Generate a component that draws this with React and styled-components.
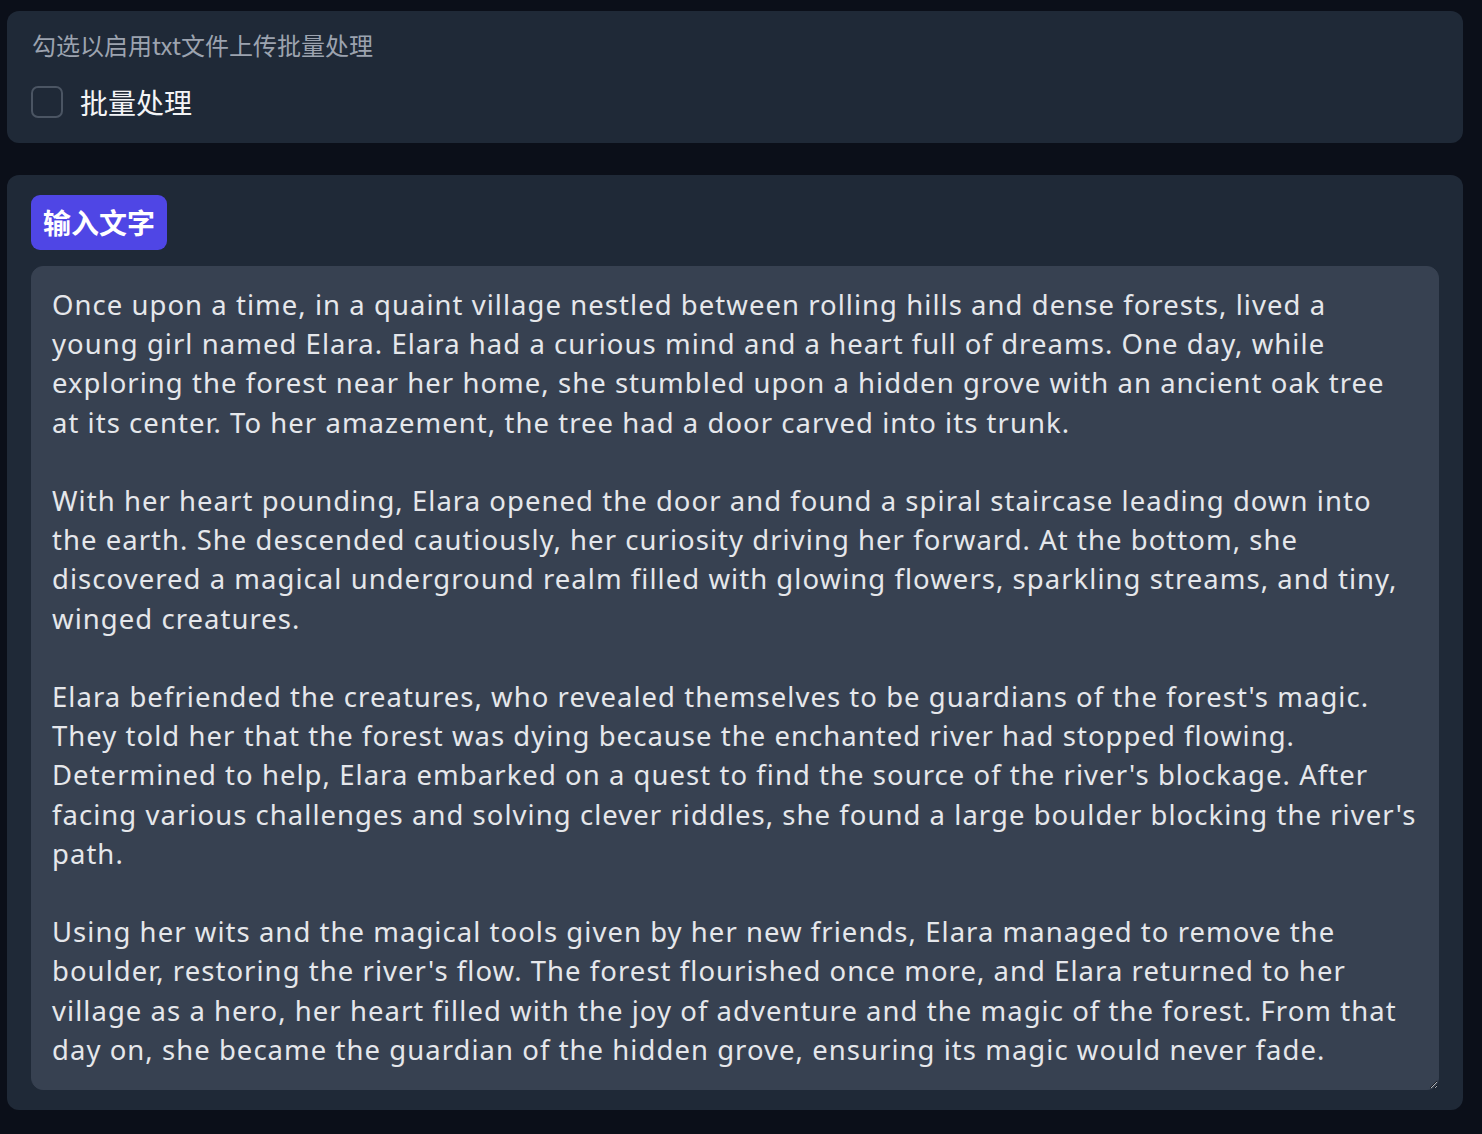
import React from "react";
import styled, { createGlobalStyle } from "styled-components";

const GlobalStyle = createGlobalStyle`
  html, body {
    margin: 0;
    background: #0b0f19;
  }
  body {
    font-family: "Noto Sans", "Noto Sans CJK SC", sans-serif;
    color: #e5e7eb;
  }
`;

const Page = styled.div`
  display: flex;
  flex-direction: column;
  gap: 32px;
  padding: 11px 19px 24px 7px;
`;

const Panel = styled.section`
  background: #1f2937;
  border-radius: 12px;
  padding: ${({ $pad }) => $pad};
  display: flex;
  flex-direction: column;
`;

const Hint = styled.div`
  font-family: "Noto Sans CJK SC", sans-serif;
  font-size: 24px;
  line-height: 32px;
  color: #9ca3af;
  margin-left: 1px;
`;

const CheckRow = styled.label`
  display: flex;
  align-items: center;
  gap: 17px;
  margin-top: 25px;
  cursor: pointer;
`;

const Box = styled.input.attrs({ type: "checkbox" })`
  appearance: none;
  margin: 0;
  width: 32px;
  height: 32px;
  border: 2px solid #4b5563;
  border-radius: 7px;
  background: #1f2937;
  box-sizing: border-box;
`;

const CheckText = styled.span`
  font-family: "Noto Sans CJK SC", sans-serif;
  font-size: 28px;
  line-height: 32px;
  font-weight: 400;
  color: #f3f4f6;
`;

const Badge = styled.span`
  align-self: flex-start;
  background: #4f46e5;
  color: #fff;
  font-family: "Noto Sans CJK SC", sans-serif;
  font-weight: 700;
  font-size: 28px;
  line-height: 55px;
  height: 55px;
  padding: 0 12px;
  border-radius: 9px;
`;

const TextBox = styled.textarea`
  display: block;
  margin-top: 16px;
  box-sizing: border-box;
  width: 100%;
  height: 824px;
  padding: 18px 19px 18px 20px;
  border: 1px solid #374151;
  border-radius: 12px;
  background: #374151;
  color: #e5e7eb;
  font-family: "Noto Sans", sans-serif;
  font-size: 27.46px;
  letter-spacing: 1.056px;
  line-height: 39.2px;
  resize: vertical;
  overflow: hidden;
  outline: none;
`;

const story = `Once upon a time, in a quaint village nestled between rolling hills and dense forests, lived a young girl named Elara. Elara had a curious mind and a heart full of dreams. One day, while exploring the forest near her home, she stumbled upon a hidden grove with an ancient oak tree at its center. To her amazement, the tree had a door carved into its trunk.

With her heart pounding, Elara opened the door and found a spiral staircase leading down into the earth. She descended cautiously, her curiosity driving her forward. At the bottom, she discovered a magical underground realm filled with glowing flowers, sparkling streams, and tiny, winged creatures.

Elara befriended the creatures, who revealed themselves to be guardians of the forest's magic. They told her that the forest was dying because the enchanted river had stopped flowing. Determined to help, Elara embarked on a quest to find the source of the river's blockage. After facing various challenges and solving clever riddles, she found a large boulder blocking the river's path.

Using her wits and the magical tools given by her new friends, Elara managed to remove the boulder, restoring the river's flow. The forest flourished once more, and Elara returned to her village as a hero, her heart filled with the joy of adventure and the magic of the forest. From that day on, she became the guardian of the hidden grove, ensuring its magic would never fade.`;

export default function App() {
  return (
    <>
      <GlobalStyle />
      <Page>
        <Panel $pad="18px 24px 25px">
          <Hint>勾选以启用txt文件上传批量处理</Hint>
          <CheckRow>
            <Box />
            <CheckText>批量处理</CheckText>
          </CheckRow>
        </Panel>
        <Panel $pad="20px 24px 20px">
          <Badge>输入文字</Badge>
          <TextBox defaultValue={story} spellCheck={false} />
        </Panel>
      </Page>
    </>
  );
}
